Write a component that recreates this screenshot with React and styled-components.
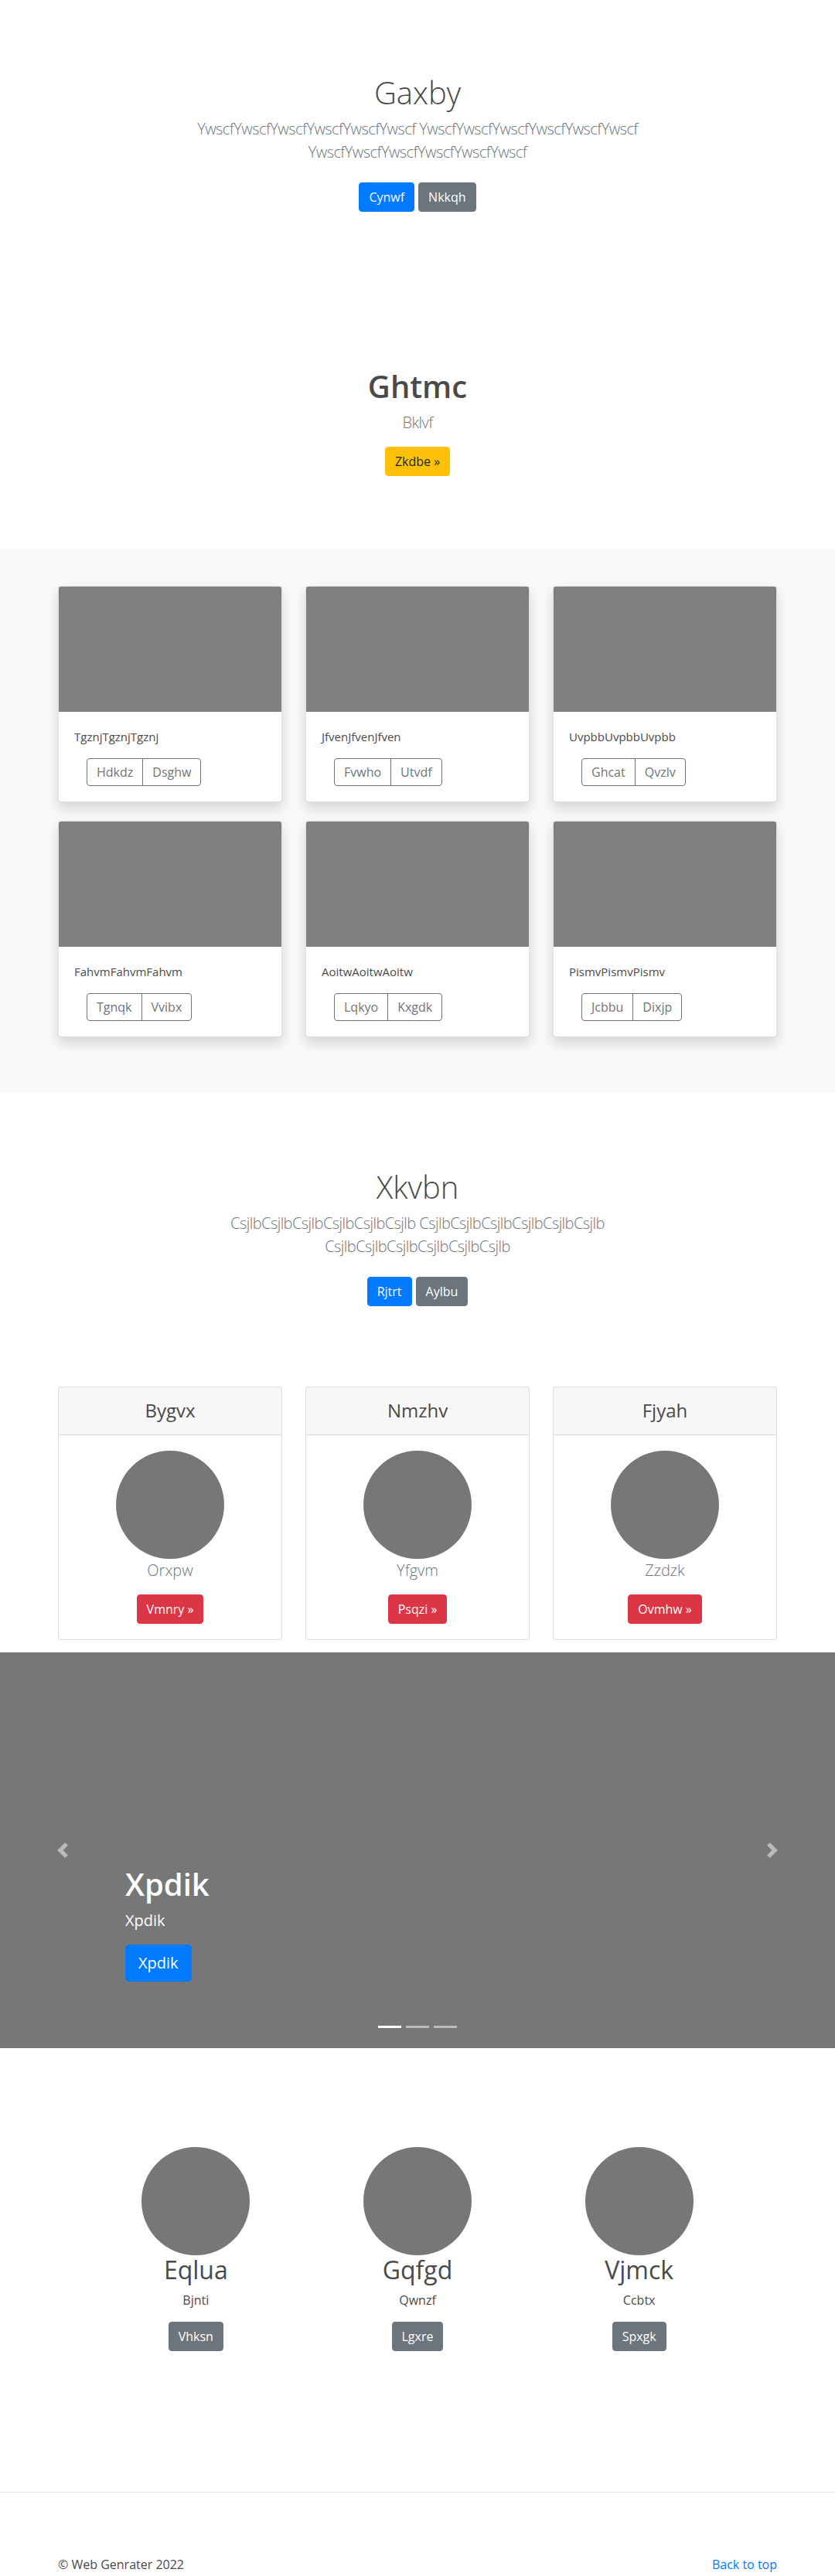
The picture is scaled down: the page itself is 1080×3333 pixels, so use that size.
import React from "react";
import styled, { createGlobalStyle, css } from "styled-components";

const GlobalStyle = createGlobalStyle`
  *, *::before, *::after { box-sizing: border-box; }
  body {
    margin: 0;
    font-family: "Open Sans", "Noto Sans", Arial, sans-serif;
    font-size: 16px;
    line-height: 1.5;
    color: #4a4a4a;
    background: #fff;
  }
  p { margin: 0; }
`;

const variants = {
  primary: css`
    color: #fff;
    background: #007bff;
    border-color: #007bff;
  `,
  secondary: css`
    color: #fff;
    background: #6c757d;
    border-color: #6c757d;
  `,
  warning: css`
    color: #212529;
    background: #ffc107;
    border-color: #ffc107;
  `,
  danger: css`
    color: #fff;
    background: #dc3545;
    border-color: #dc3545;
  `,
  outline: css`
    color: #6c757d;
    background: transparent;
    border-color: #6c757d;
  `,
};

const Button = styled.a`
  display: inline-block;
  font-size: ${(p) => (p.$lg ? "20px" : "16px")};
  line-height: ${(p) => (p.$lg ? "30px" : "24px")};
  padding: ${(p) => (p.$lg ? "8px 16px" : "6px 12px")};
  border: 1px solid transparent;
  border-radius: ${(p) => (p.$lg ? "5px" : "4px")};
  text-decoration: none;
  white-space: nowrap;
  cursor: pointer;
  ${(p) => variants[p.$variant || "primary"]}
`;

const Container = styled.div`
  max-width: 960px;
  margin: 0 auto;
  padding: 0 15px;
`;

const Hero = styled.section`
  padding: ${(p) => p.$top}px 0 ${(p) => p.$bottom}px;
  text-align: center;
`;

const HeroTitle = styled.h1`
  margin: 0 0 8px;
  font-size: 40px;
  line-height: 1.2;
  font-weight: ${(p) => p.$weight || 300};
  color: #4a4a4a;
`;

const Lead = styled.p`
  max-width: 610px;
  margin: 0 auto 16px;
  font-size: 20px;
  font-weight: 300;
  line-height: 30px;
  letter-spacing: -0.55px;
  color: #6c757d;
`;

const ButtonRow = styled.div`
  display: flex;
  justify-content: center;
  gap: 5px;
  padding: ${(p) => (p.$spaced ? "8px 0" : "0")};
`;

const Album = styled.section`
  padding: 48px 0 72px;
  background: #f8f9fa;
`;

const CardGrid = styled.div`
  display: grid;
  grid-template-columns: repeat(3, 1fr);
  column-gap: 30px;
  row-gap: 24px;
`;

const AlbumCard = styled.div`
  background: #fff;
  border: 1px solid rgba(0, 0, 0, 0.125);
  border-radius: 4px;
  overflow: hidden;
  box-shadow: 0 8px 16px rgba(0, 0, 0, 0.15);
`;

const Thumb = styled.div`
  aspect-ratio: 16 / 9;
  background: #808080;
`;

const CardBody = styled.div`
  padding: 20px;
  text-align: ${(p) => (p.$center ? "center" : "left")};
`;

const CardText = styled.p`
  font-size: 15px;
  line-height: 24px;
  margin-bottom: 16px;
`;

const BtnGroup = styled.div`
  display: inline-flex;
  margin-left: 16px;
`;

const GroupButton = styled(Button)`
  padding: 5px 12px;
  &:first-child {
    border-top-right-radius: 0;
    border-bottom-right-radius: 0;
  }
  &:last-child {
    margin-left: -1px;
    border-top-left-radius: 0;
    border-bottom-left-radius: 0;
  }
`;

const PriceCard = styled.div`
  background: #fff;
  border: 1px solid rgba(0, 0, 0, 0.125);
  border-radius: 4px;
  margin-bottom: 16px;
`;

const PriceHeader = styled.div`
  padding: 16px 20px;
  background: rgba(0, 0, 0, 0.03);
  border-bottom: 1px solid rgba(0, 0, 0, 0.125);
  text-align: center;
`;

const PriceTitle = styled.h4`
  margin: 0;
  font-size: 24px;
  line-height: 1.2;
  font-weight: 400;
`;

const Avatar = styled.div`
  width: 140px;
  height: 140px;
  border-radius: 50%;
  background: #777;
  margin: 0 auto;
`;

const Muted = styled.p`
  font-size: 20px;
  font-weight: 300;
  line-height: 30px;
  color: #6c757d;
  margin-bottom: 16px;
`;

const Carousel = styled.div`
  position: relative;
  height: 512px;
  background: #777;
  margin-bottom: 64px;
`;

const Caption = styled.div`
  position: absolute;
  left: 15%;
  right: 15%;
  bottom: 66px;
  padding: 20px 0;
  color: #fff;
  text-align: left;
`;

const CaptionTitle = styled.h1`
  margin: 0 0 8px;
  font-size: 40px;
  line-height: 1.2;
  font-weight: 600;
`;

const CaptionText = styled.p`
  font-size: 20px;
  line-height: 30px;
  margin-bottom: 16px;
`;

const Control = styled.a`
  position: absolute;
  top: 0;
  bottom: 0;
  ${(p) => (p.$side === "prev" ? "left: 0;" : "right: 0;")}
  width: 15%;
  display: flex;
  align-items: center;
  justify-content: center;
  opacity: 0.5;
  svg {
    width: 20px;
    height: 20px;
  }
`;

const Indicators = styled.ol`
  position: absolute;
  left: 0;
  right: 0;
  bottom: 0;
  margin: 0 0 16px;
  padding: 0;
  list-style: none;
  display: flex;
  justify-content: center;
`;

const Indicator = styled.li`
  width: 30px;
  height: 3px;
  margin: 10px 3px;
  background: #fff;
  opacity: ${(p) => (p.$active ? 1 : 0.5)};
`;

const Marketing = styled.section`
  width: 860px;
  margin: 0 auto;
  padding: 64px 0 182px;
  display: grid;
  grid-template-columns: repeat(3, 1fr);
  text-align: center;
`;

const FeatureTitle = styled.h2`
  margin: 0 0 8px;
  font-size: 32px;
  line-height: 1.2;
  font-weight: 400;
`;

const FeatureText = styled.p`
  margin-bottom: 16px;
`;

const Footer = styled.footer`
  border-top: 1px solid #e5e5e5;
  padding-top: 81px;
`;

const FooterRow = styled(Container)`
  display: flex;
  justify-content: space-between;
  p {
    margin-bottom: 16px;
  }
  a {
    color: #007bff;
    text-decoration: none;
  }
`;

const albumItems = [
  { text: "TgznjTgznjTgznj", a: "Hdkdz", b: "Dsghw" },
  { text: "JfvenJfvenJfven", a: "Fvwho", b: "Utvdf" },
  { text: "UvpbbUvpbbUvpbb", a: "Ghcat", b: "Qvzlv" },
  { text: "FahvmFahvmFahvm", a: "Tgnqk", b: "Vvibx" },
  { text: "AoitwAoitwAoitw", a: "Lqkyo", b: "Kxgdk" },
  { text: "PismvPismvPismv", a: "Jcbbu", b: "Dixjp" },
];

const pricing = [
  { title: "Bygvx", name: "Orxpw", cta: "Vmnry »" },
  { title: "Nmzhv", name: "Yfgvm", cta: "Psqzi »" },
  { title: "Fjyah", name: "Zzdzk", cta: "Ovmhw »" },
];

const features = [
  { title: "Eqlua", text: "Bjnti", cta: "Vhksn" },
  { title: "Gqfgd", text: "Qwnzf", cta: "Lgxre" },
  { title: "Vjmck", text: "Ccbtx", cta: "Spxgk" },
];

export default function App() {
  return (
    <>
      <GlobalStyle />

      <Hero $top={96} $bottom={96}>
        <Container>
          <HeroTitle>Gaxby</HeroTitle>
          <Lead>
            YwscfYwscfYwscfYwscfYwscfYwscf YwscfYwscfYwscfYwscfYwscfYwscf
            YwscfYwscfYwscfYwscfYwscfYwscf
          </Lead>
          <ButtonRow $spaced>
            <Button $variant="primary">Cynwf</Button>
            <Button $variant="secondary">Nkkqh</Button>
          </ButtonRow>
        </Container>
      </Hero>

      <Hero $top={98} $bottom={94}>
        <Container>
          <HeroTitle $weight={600}>Ghtmc</HeroTitle>
          <Lead>Bklvf</Lead>
          <ButtonRow>
            <Button $variant="warning">Zkdbe »</Button>
          </ButtonRow>
        </Container>
      </Hero>

      <Album>
        <Container>
          <CardGrid>
            {albumItems.map((item) => (
              <AlbumCard key={item.text}>
                <Thumb />
                <CardBody>
                  <CardText>{item.text}</CardText>
                  <BtnGroup>
                    <GroupButton $variant="outline">{item.a}</GroupButton>
                    <GroupButton $variant="outline">{item.b}</GroupButton>
                  </BtnGroup>
                </CardBody>
              </AlbumCard>
            ))}
          </CardGrid>
        </Container>
      </Album>

      <Hero $top={98} $bottom={96}>
        <Container>
          <HeroTitle>Xkvbn</HeroTitle>
          <Lead>
            CsjlbCsjlbCsjlbCsjlbCsjlbCsjlb CsjlbCsjlbCsjlbCsjlbCsjlbCsjlb
            CsjlbCsjlbCsjlbCsjlbCsjlbCsjlb
          </Lead>
          <ButtonRow $spaced>
            <Button $variant="primary">Rjtrt</Button>
            <Button $variant="secondary">Aylbu</Button>
          </ButtonRow>
        </Container>
      </Hero>

      <Container>
        <CardGrid>
          {pricing.map((p) => (
            <PriceCard key={p.title}>
              <PriceHeader>
                <PriceTitle>{p.title}</PriceTitle>
              </PriceHeader>
              <CardBody $center>
                <Avatar />
                <Muted>{p.name}</Muted>
                <Button $variant="danger">{p.cta}</Button>
              </CardBody>
            </PriceCard>
          ))}
        </CardGrid>
      </Container>

      <Carousel>
        <Caption>
          <CaptionTitle>Xpdik</CaptionTitle>
          <CaptionText>Xpdik</CaptionText>
          <Button $variant="primary" $lg>
            Xpdik
          </Button>
        </Caption>
        <Control $side="prev">
          <svg viewBox="0 0 8 8" fill="#fff">
            <path d="M5.25 0l-4 4 4 4 1.5-1.5-2.5-2.5 2.5-2.5-1.5-1.5z" />
          </svg>
        </Control>
        <Control $side="next">
          <svg viewBox="0 0 8 8" fill="#fff">
            <path d="M2.75 0l-1.5 1.5 2.5 2.5-2.5 2.5 1.5 1.5 4-4-4-4z" />
          </svg>
        </Control>
        <Indicators>
          <Indicator $active />
          <Indicator />
          <Indicator />
        </Indicators>
      </Carousel>

      <Marketing>
        {features.map((f) => (
          <div key={f.title}>
            <Avatar />
            <FeatureTitle>{f.title}</FeatureTitle>
            <FeatureText>{f.text}</FeatureText>
            <Button $variant="secondary">{f.cta}</Button>
          </div>
        ))}
      </Marketing>

      <Footer>
        <FooterRow>
          <p>© Web Genrater 2022</p>
          <p>
            <a href="#top">Back to top</a>
          </p>
        </FooterRow>
      </Footer>
    </>
  );
}
